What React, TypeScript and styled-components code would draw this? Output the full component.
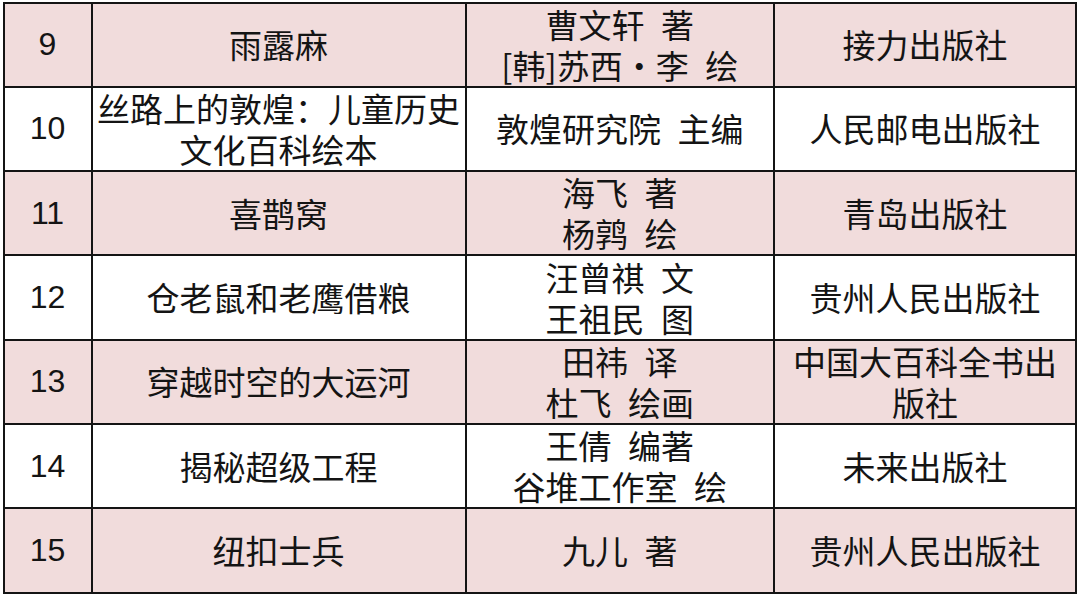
import React from "react";
import styled, { createGlobalStyle } from "styled-components";

const Global = createGlobalStyle`
  html, body { margin: 0; padding: 0; background: #ffffff; }
  body { font-family: "Noto Sans CJK SC", "Noto Sans", sans-serif; }
`;

const Page = styled.div`
  width: 1080px;
  height: 597px;
  padding: 1.5px 0 0 2.5px;
  box-sizing: border-box;
  overflow: hidden;
`;

const Grid = styled.div`
  display: grid;
  grid-template-columns: 86px 372px 306.5px 300px;
  grid-auto-rows: 82.3px;
  gap: 2px;
  padding: 2px;
  width: max-content;
  background: #141414;
`;

const Cell = styled.div<{ $shade: boolean; $num?: boolean }>`
  background: ${(p) => (p.$shade ? "#f1dcdc" : "#ffffff")};
  display: flex;
  flex-direction: column;
  align-items: center;
  justify-content: center;
  text-align: center;
  color: #141414;
  font-family: ${(p) =>
    p.$num
      ? `"Liberation Sans", Arial, sans-serif`
      : `"Noto Sans CJK SC", "Noto Sans", sans-serif`};
  font-size: ${(p) => (p.$num ? "32px" : "33px")};
  line-height: 41px;
  white-space: pre;
`;

const Line = styled.span`
  display: block;
  height: 41px;
`;

type Row = { no: string; title: string[]; author: string[]; pub: string[] };

const S = "\u2002";

const rows: Row[] = [
  { no: "9", title: ["雨露麻"], author: [`曹文轩${S}著`, `[韩]苏西·李${S}绘`], pub: ["接力出版社"] },
  { no: "10", title: ["丝路上的敦煌：儿童历史", "文化百科绘本"], author: [`敦煌研究院${S}主编`], pub: ["人民邮电出版社"] },
  { no: "11", title: ["喜鹊窝"], author: [`海飞${S}著`, `杨鹑${S}绘`], pub: ["青岛出版社"] },
  { no: "12", title: ["仓老鼠和老鹰借粮"], author: [`汪曾祺${S}文`, `王祖民${S}图`], pub: ["贵州人民出版社"] },
  { no: "13", title: ["穿越时空的大运河"], author: [`田祎${S}译`, `杜飞${S}绘画`], pub: ["中国大百科全书出", "版社"] },
  { no: "14", title: ["揭秘超级工程"], author: [`王倩${S}编著`, `谷堆工作室${S}绘`], pub: ["未来出版社"] },
  { no: "15", title: ["纽扣士兵"], author: [`九儿${S}著`], pub: ["贵州人民出版社"] },
];

const Lines = ({ items }: { items: string[] }) => (
  <>
    {items.map((t, i) => (
      <Line key={i}>{t}</Line>
    ))}
  </>
);

export default function App() {
  return (
    <>
      <Global />
      <Page>
        <Grid>
          {rows.map((r, i) => {
            const shade = i % 2 === 0;
            return (
              <React.Fragment key={r.no}>
                <Cell $shade={shade} $num>
                  {r.no}
                </Cell>
                <Cell $shade={shade}>
                  <Lines items={r.title} />
                </Cell>
                <Cell $shade={shade}>
                  <Lines items={r.author} />
                </Cell>
                <Cell $shade={shade}>
                  <Lines items={r.pub} />
                </Cell>
              </React.Fragment>
            );
          })}
        </Grid>
      </Page>
    </>
  );
}
